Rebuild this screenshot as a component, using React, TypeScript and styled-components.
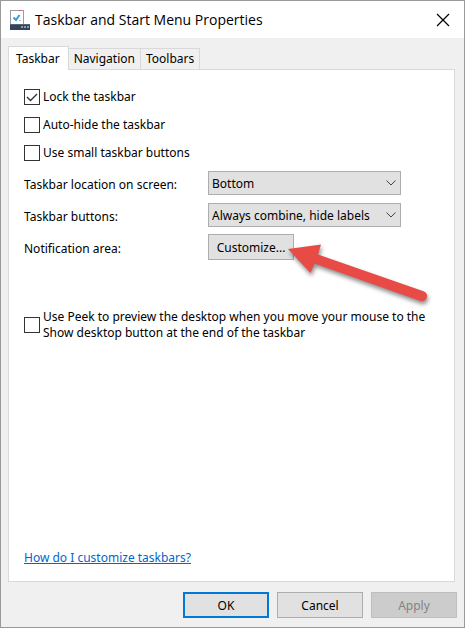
import React, { useState } from "react";
import styled, { createGlobalStyle, css } from "styled-components";

const GlobalStyle = createGlobalStyle`
  * { box-sizing: border-box; }
  body {
    margin: 0;
    background: #f0f0f0;
    color: #000;
    font: 12px/16px "Noto Sans", "Open Sans", sans-serif;
  }
  button, select, input { font: inherit; color: inherit; margin: 0; }
`;

const Dialog = styled.main`
  display: flex;
  flex-direction: column;
  min-height: 100vh;
  border: 1px solid #999;
  background: #f0f0f0;
`;

const TitleBar = styled.header`
  display: flex;
  align-items: center;
  gap: 5px;
  height: 37px;
  padding: 0 14px 0 9px;
  background: #fff;
`;

const Title = styled.h1`
  flex: 1;
  margin: 0;
  font: 400 14px/20px "Open Sans", "Noto Sans", sans-serif;
`;

const CloseButton = styled.button`
  display: flex;
  padding: 0;
  border: 0;
  background: none;
`;

const TabList = styled.div`
  display: flex;
  align-items: flex-end;
  margin: 8px 10px 0 7px;
`;

const Tab = styled.button<{ $active?: boolean }>`
  height: 21px;
  padding: 0 5px;
  border: 1px solid #d9d9d9;
  border-width: 1px 1px 0 0;
  background: #f0f0f0;
  white-space: nowrap;
  ${(p) =>
    p.$active &&
    css`
      z-index: 1;
      height: 24px;
      margin-bottom: -1px;
      padding: 0 8px 0 7px;
      border-left-width: 1px;
      background: #fff;
    `}
`;

const Panel = styled.section`
  display: flex;
  flex: 1;
  flex-direction: column;
  margin: 0 9px 0 7px;
  padding: 19px 15px 15px;
  border: 1px solid #d9d9d9;
  background: #fff;
`;

const CheckList = styled.div`
  display: flex;
  flex-direction: column;
  gap: 12px;
`;

const CheckRow = styled.label`
  display: flex;
  align-items: center;
  gap: 3px;
`;

const CheckFrame = styled.span`
  display: grid;
  flex: none;
  width: 16px;
  height: 16px;
  > * { grid-area: 1 / 1; }
  svg { pointer-events: none; visibility: hidden; }
  input:checked + svg { visibility: visible; }
`;

const CheckInput = styled.input`
  appearance: none;
  width: 16px;
  height: 16px;
  border: 1px solid #333;
  background: #fff;
`;

const Settings = styled.div`
  display: grid;
  grid-template-columns: 184px minmax(0, 193px);
  align-items: center;
  row-gap: 8px;
  margin: 10px 0 50px;
`;

const SettingLabel = styled.label`
  padding-top: 4px;
`;

const SelectFrame = styled.div`
  display: grid;
  align-items: center;
  > * { grid-area: 1 / 1; }
  svg { justify-self: end; margin-right: 5px; pointer-events: none; }
`;

const Select = styled.select`
  appearance: none;
  width: 100%;
  height: 24px;
  padding: 1px 20px 0 3px;
  border: 1px solid #adadad;
  border-radius: 0;
  background: #e1e1e1;
`;

const PushButton = styled.button<{ $primary?: boolean }>`
  flex: none;
  width: 86px;
  height: 26px;
  padding: 1px 0 0;
  border: ${(p) => (p.$primary ? "2px solid #0078d7" : "1px solid #adadad")};
  background: #e1e1e1;
  &:disabled {
    border-color: #bfbfbf;
    background: #ccc;
    color: #838383;
  }
`;

const Callout = styled.div`
  position: relative;
  display: flex;
  align-items: center;
  height: 24px;
  svg {
    position: absolute;
    top: 0;
    left: 76px;
    pointer-events: none;
    filter: drop-shadow(1px 3px 2px rgba(0, 0, 0, 0.45));
  }
`;

const HelpLink = styled.a`
  align-self: flex-start;
  margin-top: auto;
  color: #0066cc;
`;

const Footer = styled.footer`
  display: flex;
  justify-content: flex-end;
  gap: 8px;
  padding: 10px 7px 9px;
`;

function TaskbarIcon() {
  return (
    <svg width="20" height="20" viewBox="0 0 20 20" aria-hidden="true">
      <rect x="0.5" y="0.5" width="13" height="14" fill="#fff" stroke="#9a9da1" />
      <path d="M9 .5h2" stroke="#e8503f" />
      <path d="M3.500 7.500l2.500 2.500L9.500 5" fill="none" stroke="#2f9fe0" strokeWidth="2" />
      <path d="M9 10.500h2" stroke="#b9bdc2" />
      <rect y="14" width="20" height="6" fill="#33435c" />
      <rect y="14" width="20" height="1" fill="#56647a" />
      <path d="M11 17h2M14 17h2M17 17h2" stroke="#8d9bb0" strokeWidth="2" />
    </svg>
  );
}

function Checkbox({ children, checked = false }: { children: React.ReactNode; checked?: boolean }) {
  return (
    <CheckRow>
      <CheckFrame>
        <CheckInput type="checkbox" defaultChecked={checked} />
        <svg width="16" height="16" viewBox="0 0 16 16" aria-hidden="true">
          <path d="M3 8l3.500 3.500L13 5" fill="none" stroke="#333" strokeWidth="1.4" />
        </svg>
      </CheckFrame>
      <span>{children}</span>
    </CheckRow>
  );
}

function Dropdown({ id, options }: { id: string; options: string[] }) {
  return (
    <SelectFrame>
      <Select id={id}>
        {options.map((o) => (
          <option key={o}>{o}</option>
        ))}
      </Select>
      <svg width="10" height="6" viewBox="0 0 10 6" aria-hidden="true">
        <path d="M.5 .5L5 5L9.500 .5" fill="none" stroke="#444" />
      </svg>
    </SelectFrame>
  );
}

const tabs = ["Taskbar", "Navigation", "Toolbars"];

export default function App() {
  const [active, setActive] = useState(tabs[0]);
  return (
    <>
      <GlobalStyle />
      <Dialog>
        <TitleBar>
          <TaskbarIcon />
          <Title>Taskbar and Start Menu Properties</Title>
          <CloseButton aria-label="Close">
            <svg width="14" height="14" viewBox="0 0 14 14" aria-hidden="true">
              <path d="M1 1l12 12M13 1L1 13" stroke="#000" strokeWidth="1.2" />
            </svg>
          </CloseButton>
        </TitleBar>
        <TabList role="tablist">
          {tabs.map((t) => (
            <Tab key={t} role="tab" aria-selected={t === active} $active={t === active} onClick={() => setActive(t)}>
              {t}
            </Tab>
          ))}
        </TabList>
        <Panel role="tabpanel">
          <CheckList>
            <Checkbox checked>Lock the taskbar</Checkbox>
            <Checkbox>Auto-hide the taskbar</Checkbox>
            <Checkbox>Use small taskbar buttons</Checkbox>
          </CheckList>
          <Settings>
            <SettingLabel htmlFor="location">Taskbar location on screen:</SettingLabel>
            <Dropdown id="location" options={["Bottom", "Left", "Right", "Top"]} />
            <SettingLabel htmlFor="buttons">Taskbar buttons:</SettingLabel>
            <Dropdown
              id="buttons"
              options={["Always combine, hide labels", "Combine when taskbar is full", "Never combine"]}
            />
            <SettingLabel as="span">Notification area:</SettingLabel>
            <Callout>
              <PushButton>Customize...</PushButton>
              <svg width="150" height="70" viewBox="284 235 150 70" aria-hidden="true">
                <path
                  d="M288 249L321 244.500L318 254.500L423.500 291.200A5 5 0 0 1 420.500 301L314.500 263.500L310.500 273Z"
                  fill="#e84b45"
                />
              </svg>
            </Callout>
          </Settings>
          <Checkbox>
            Use Peek to preview the desktop when you move your mouse to the Show desktop button at the end of the
            taskbar
          </Checkbox>
          <HelpLink href="#help">How do I customize taskbars?</HelpLink>
        </Panel>
        <Footer>
          <PushButton $primary>OK</PushButton>
          <PushButton>Cancel</PushButton>
          <PushButton disabled>Apply</PushButton>
        </Footer>
      </Dialog>
    </>
  );
}
